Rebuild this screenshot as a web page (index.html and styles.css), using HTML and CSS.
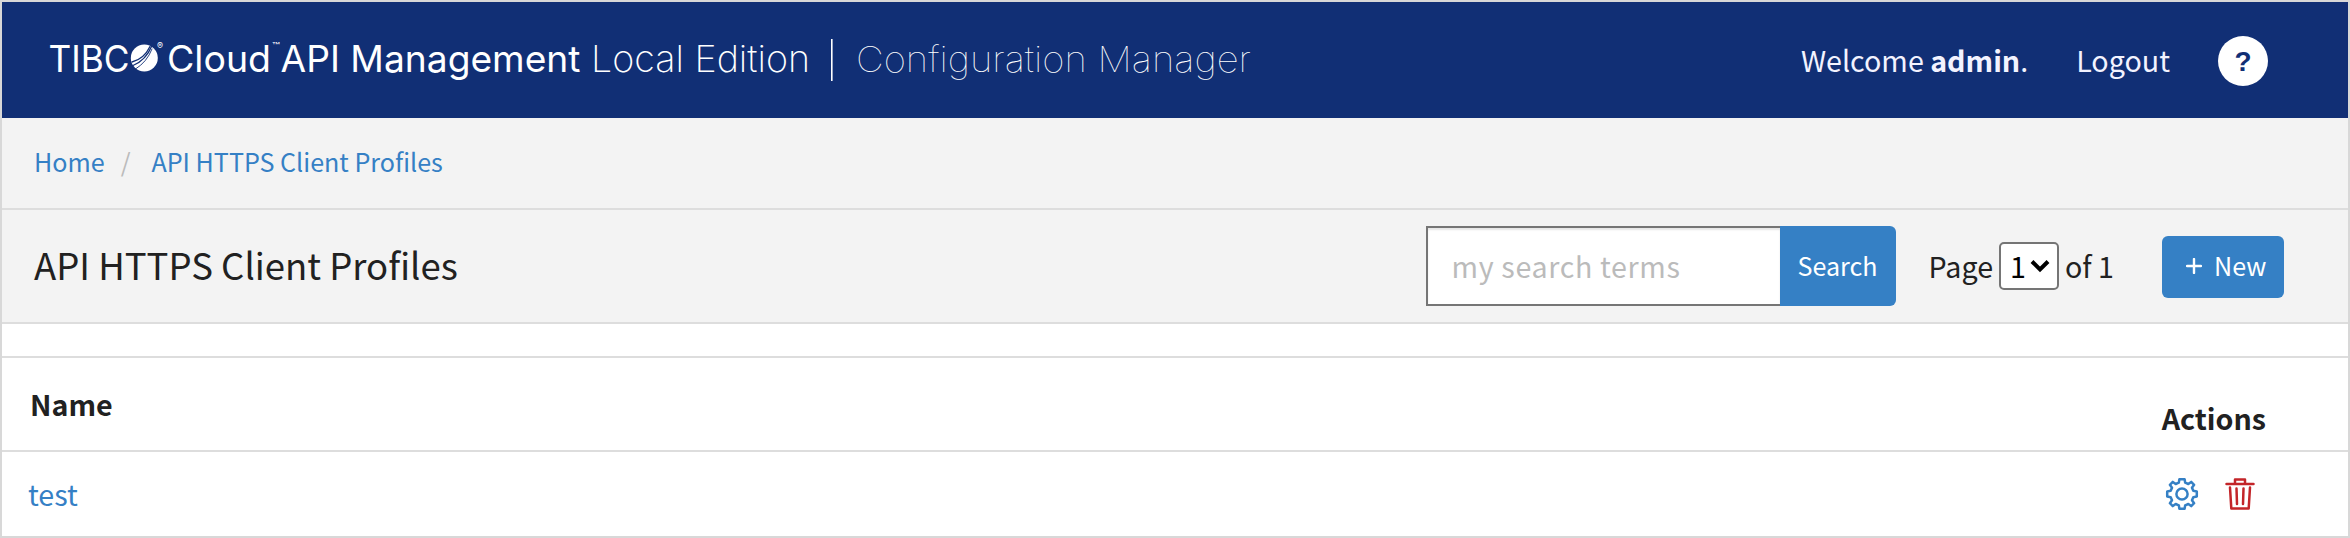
FILE: index.html
```html
<!DOCTYPE html>
<html lang="en">
<head>
<meta charset="utf-8">
<title>API HTTPS Client Profiles</title>
<link rel="stylesheet" href="styles.css">
</head>
<body>
<div class="app">
  <header class="topbar">
    <svg class="brand" width="1210" height="60" viewBox="48 30 1210 60" role="img">
      <g fill="#fff" font-family="Inter, sans-serif" font-size="37">
        <text x="48.5" y="71.7" textLength="81" lengthAdjust="spacingAndGlyphs">TIBC</text>
        <circle cx="144.3" cy="58" r="13.5"/>
        <g fill="none" stroke="#112f75" stroke-linecap="round">
          <path d="M132 62Q144 59 150 46.500" stroke-width="1.300"/>
          <path d="M133 65.500Q146 60 151.500 46.500" stroke-width="1.300"/>
          <path d="M135.500 69Q147 62 152 49" stroke-width=".9"/>
        </g>
        <text x="157" y="48.500" font-size="9">®</text>
        <text x="167" y="71.7" textLength="104" lengthAdjust="spacingAndGlyphs">Cloud</text>
        <text x="272" y="49" font-size="9" textLength="8" lengthAdjust="spacingAndGlyphs">™</text>
        <text x="280.500" y="71.7" textLength="300" lengthAdjust="spacingAndGlyphs">API Management</text>
        <text x="591" y="71.7" textLength="219" lengthAdjust="spacingAndGlyphs" font-weight="150">Local Edition</text>
        <rect x="831" y="39" width="1.600" height="42"/>
        <text x="856" y="71.7" font-size="35.500" textLength="395" lengthAdjust="spacingAndGlyphs" font-weight="100">Configuration Manager</text>
      </g>
    </svg>
    <nav class="account">
      <span class="welcome">Welcome <b>admin</b>.</span>
      <a class="logout">Logout</a>
      <a class="help">?</a>
    </nav>
  </header>
  <nav class="crumbs"><a>Home</a><span class="slash">/</span><a>API HTTPS Client Profiles</a></nav>
  <section class="toolbar">
    <h1 class="title">API HTTPS Client Profiles</h1>
    <div class="search">
      <input class="search-input" placeholder="my search terms">
      <button class="search-button">Search</button>
    </div>
    <div class="pager">
      <span>Page</span>
      <span class="page-select">1<svg width="20" height="14" viewBox="0 0 20 14"><path d="M2 2.500L10 10.500L18 2.500" fill="none" stroke="#000" stroke-width="4"/></svg></span>
      <span>of 1</span>
    </div>
    <button class="new-button"><svg width="16" height="16" viewBox="0 0 16 16"><path d="M8 1V15M1 8H15" stroke="#fff" stroke-width="2.400" stroke-linecap="round"/></svg><span class="new-label">New</span></button>
  </section>
  <main class="listing">
    <div class="row head"><span class="name-head">Name</span><span class="actions-head">Actions</span></div>
    <div class="row item">
      <a class="item-name">test</a>
      <span class="icons">
        <svg width="34" height="34" viewBox="-17 -17 34 34" fill="none" stroke="#3580c5" stroke-width="2.500" stroke-linejoin="round">
          <circle r="5.600"/>
          <path d="M-2.600 -14.800H2.600L3.200 -11.300L6.300 -10L9.200 -12.100L12.100 -9.200L10 -6.300L11.300 -3.200L14.800 -2.600V2.600L11.300 3.200L10 6.300L12.100 9.200L9.200 12.100L6.300 10L3.200 11.300L2.600 14.800H-2.600L-3.200 11.300L-6.300 10L-9.200 12.100L-12.100 9.200L-10 6.300L-11.300 3.200L-14.800 2.600V-2.600L-11.300 -3.200L-10 -6.300L-12.100 -9.200L-9.200 -12.100L-6.300 -10L-3.200 -11.300Z"/>
        </svg>
        <svg width="30" height="34" viewBox="0 0 30 34" fill="none" stroke="#c32529" stroke-width="2.500" stroke-linecap="round" stroke-linejoin="round">
          <path d="M1.500 7H28.500M10 6V2.500H20V6M5 10.500L6.300 31.500H23.700L25 10.500M11.500 11.500L12 27M18.500 11.500L18 27"/>
        </svg>
      </span>
    </div>
  </main>
</div>
</body>
</html>
```
FILE: styles.css
```css
* { box-sizing: border-box; }
body { margin: 0; font-family: "Noto Sans CJK SC", "Open Sans", sans-serif; font-size: 28.65px; line-height: 42px; color: #212121; }
button, input { font-family: inherit; margin: 0; }
.app { height: 538px; border: 2px solid #d8d8d8; background: #fff; display: flex; flex-direction: column; }
.topbar { height: 116px; background: #112f75; display: flex; justify-content: space-between; padding: 28px 80px 0 46px; }
.brand { display: block; }
.account { display: flex; color: #f3f3ff; padding-top: 9px; }
.welcome { margin: 0 48px 0 0; }
.logout { margin-right: 48px; }
.help { width: 50px; height: 50px; margin-top: -3px; border-radius: 50%; background: #fff; color: #112f75; font-family: "Liberation Sans", sans-serif; font-weight: 700; font-size: 28px; line-height: 52px; text-align: center; }
.crumbs { height: 92px; background: #f3f3f3; border-bottom: 2px solid #ddd; padding: 22px 0 0 32px; display: flex; font-size: 25.1px; color: #3580c5; }
.slash { color: #bbb; margin: 0 21px 0 16px; }
.toolbar { height: 114px; background: #f3f3f3; border-bottom: 2px solid #ddd; padding: 16px 64px 0 32px; display: flex; align-items: flex-start; }
.title { margin: 0 auto 0 0; padding-top: 18px; font-size: 36.5px; font-weight: 400; line-height: 42px; }
.search { display: flex; height: 80px; }
.search-input { width: 354px; height: 80px; border: 2px solid #757575; border-right: 0; border-radius: 0; padding: 0 0 2px 24px; font-size: 28.65px; letter-spacing: .65px; background: #fff; box-shadow: inset 0 2px 2px rgba(0,0,0,.1); }
.search-input::placeholder { color: #bbb; opacity: 1; }
.search-button { width: 116px; border: 0; border-radius: 0 6px 6px 0; background: #3580c5; color: #fff; font-size: 25.1px; padding: 0 0 2px; }
.pager { display: flex; gap: 6px; margin-left: 33px; padding-top: 16px; line-height: 48px; }
.page-select { width: 60px; height: 48px; border: 2px solid #757575; border-radius: 5px; background: #fff; color: #000; display: flex; align-items: center; gap: 4px; padding-left: 9px; line-height: 44px; }
.new-button { width: 122px; height: 62px; margin: 10px 0 0 48px; border: 0; border-radius: 6px; background: #3580c5; color: #fff; font-size: 25.1px; display: flex; align-items: center; gap: 12px; padding: 0 0 2px 24px; }
.new-label { padding-bottom: 2px; }
.listing { margin-top: 32px; border-top: 2px solid #ddd; }
.row { display: flex; justify-content: space-between; }
.head { height: 94px; border-bottom: 2px solid #ddd; font-weight: 700; padding: 25px 82px 0 28px; }
.actions-head { padding-top: 14px; }
.item { height: 84px; padding: 21px 93px 0 26px; }
.item-name { color: #3580c5; }
.icons { display: flex; gap: 26px; padding-top: 4px; }
```
